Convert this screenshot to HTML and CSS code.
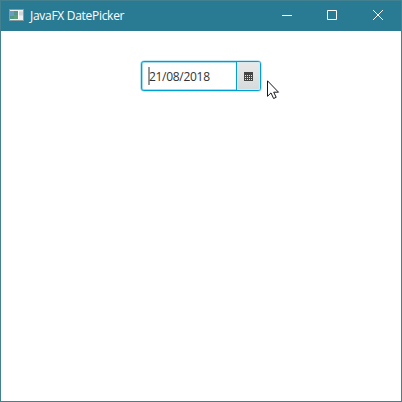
FILE: index.html
```html
<!DOCTYPE html>
<html lang="en">
<head>
<meta charset="utf-8">
<title>JavaFX DatePicker</title>
<link rel="stylesheet" href="styles.css">
</head>
<body>
<div class="window">
  <header class="titlebar">
    <svg class="app-icon" width="15" height="12" viewBox="0 0 15 12">
      <rect width="15" height="12" fill="#87999f"/>
      <rect x="1" y="1" width="13" height="10" fill="#eef1f1"/>
      <rect x="1" y="2" width="8" height="8" fill="#55988b"/>
      <path d="M1 2h4v5H1z" fill="#6c9cc0"/>
      <path d="M5 6h4v4H5z" fill="#5fa078"/>
      <path d="M9.5 2v8" stroke="#fff"/>
      <path d="M11 2.5v4M13 2.5v4" stroke="#b5bcbf"/>
    </svg>
    <span class="title">JavaFX DatePicker</span>
    <div class="controls">
      <span class="control"><svg width="12" height="12" viewBox="0 0 12 12"><path d="M1 6.5h10"/></svg></span>
      <span class="control"><svg width="12" height="12" viewBox="0 0 12 12"><path d="M1.5 1.5h9v9h-9z"/></svg></span>
      <span class="control"><svg width="12" height="12" viewBox="0 0 12 12"><path d="M1 1l10 10M11 1L1 11"/></svg></span>
    </div>
  </header>
  <main class="content">
    <div class="date-picker">
      <div class="field"><span class="caret"></span><span class="date">21/08/2018</span></div>
      <div class="picker-button">
        <svg width="9" height="9" viewBox="0 0 9 9" shape-rendering="crispEdges">
          <path d="M0 0h9v9H0z" fill="#444"/>
          <path d="M1 3.5h7M1 5.5h7M1 7.5h7" stroke="#e2e2e2" stroke-dasharray="1 1"/>
        </svg>
      </div>
    </div>
    <svg class="pointer" width="13" height="20" viewBox="0 0 13 20">
      <path d="M.5 .8v15.5l3.5-3.4 2.6 5.6 2.6-1.2-2.5-5.1h4.8z" fill="#fff" stroke="#16161f"/>
    </svg>
  </main>
</div>
</body>
</html>
```
FILE: styles.css
```css
* { box-sizing: border-box; }
body { margin: 0; }
.window {
  display: flex;
  flex-direction: column;
  width: 402px;
  height: 402px;
  background: #fff;
  border: 1px solid #438090;
  font-family: "Open Sans", "Noto Sans", sans-serif;
}
.titlebar {
  display: flex;
  align-items: center;
  flex: 0 0 30px;
  padding: 0 1px 0 8px;
  background: #297b93;
  color: #fff;
}
.app-icon { display: block; margin: 0 6px 2px 0; }
.title { font-size: 12px; line-height: 16px; letter-spacing: -0.29px; white-space: nowrap; }
.controls { display: flex; height: 100%; margin-left: auto; }
.control { display: flex; align-items: center; justify-content: center; width: 45px; padding-bottom: 2px; }
.control:nth-child(2) { width: 46px; }
.control svg { fill: none; stroke: #fff; stroke-width: 1; }
.content { position: relative; flex: 1; padding-top: 30px; }
.date-picker {
  display: flex;
  width: 120px;
  height: 30px;
  margin-left: 140px;
  border: 1px solid #039ed3;
  border-radius: 3px;
  background: #fff;
  box-shadow: 0 0 0 0.6px #8fd6ea, inset 0 0 0 1px #a5ddec;
}
.field {
  display: flex;
  align-items: center;
  width: 94px;
  padding-left: 6px;
}
.caret { width: 2px; height: 18px; margin: -1px -1px 0 0; background: #999; }
.date { color: #333; font-size: 12px; line-height: 18px; letter-spacing: -0.3px; padding-top: 1px; }
.picker-button {
  display: flex;
  align-items: center;
  justify-content: center;
  flex: 1;
  border-left: 1px solid #039ed3;
  border-radius: 0 2px 2px 0;
  background: linear-gradient(#e9e9ea, #d6dadb);
  box-shadow: inset 0 0 0 1px #d5e9ee;
}
.pointer { position: absolute; left: 266px; top: 49px; }
```
